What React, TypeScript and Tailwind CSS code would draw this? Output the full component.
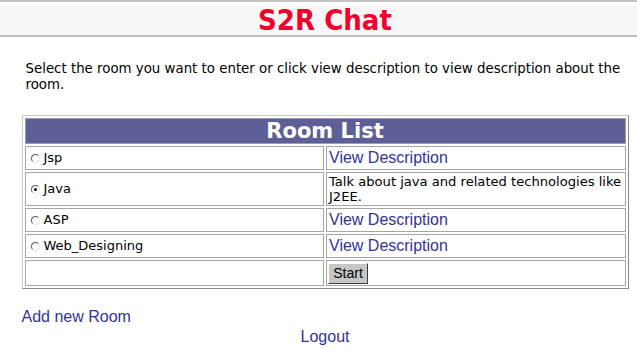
const rooms = [
  { name: "Jsp", h: "h-[24px]" },
  {
    name: "Java",
    h: "h-[34px]",
    checked: true,
    desc: ["Talk about java and related technologies like", "J2EE."],
  },
  { name: "ASP", h: "h-[24px]" },
  { name: "Web_Designing", h: "h-[24px]" },
];

function Radio({ checked }: { checked?: boolean }) {
  return (
    <span className="relative ml-[5px] mr-[4px] inline-block h-[9px] w-[9px] shrink-0 rounded-full border border-t-[#5a5a5a] border-l-[#5a5a5a] border-r-[#e6e6e6] border-b-[#e6e6e6] bg-white">
      {checked && (
        <span className="absolute left-[2px] top-[2px] h-[3px] w-[3px] rounded-full bg-black" />
      )}
    </span>
  );
}

export default function App() {
  return (
    <div className="h-[348px] w-[637px] overflow-hidden bg-white">
      <div className="w-[650px]">
        {/* page title bar */}
        <div className="border-t-2 border-b-2 border-t-[#c2c2c2] border-b-[#bdbdbd] bg-white">
          <div className="mt-[3px] bg-[#f7f7f7] text-center font-['DejaVu_Sans_Condensed','DejaVu_Sans',sans-serif] text-[29px] font-bold leading-[30px] text-[#f0002b]">
            S2R Chat
          </div>
        </div>

        <div className="mx-auto mt-[24px] w-[607px]">
          <p className="px-[4px] font-['DejaVu_Sans',sans-serif] text-[13.35px] leading-[16px] text-black">
            <span className="whitespace-nowrap">
              Select the room you want to enter or click view description to view description about the
            </span>
            <br />
            room.
          </p>

          <table className="mt-[22px] w-[607px] table-fixed border-separate border-spacing-[2px] border border-t-[#c8c8c8] border-l-[#c8c8c8] border-r-[#8a8a8a] border-b-[#8a8a8a] leading-none">
            <thead>
              <tr>
                <th
                  colSpan={2}
                  className="h-[26px] border border-[#9c9cb8] bg-[#5f5f98] p-0 text-center font-['DejaVu_Sans',sans-serif] text-[21px] font-bold leading-[24px] text-white"
                >
                  Room List
                </th>
              </tr>
            </thead>
            <tbody>
              {rooms.map((room) => (
                <tr key={room.name}>
                  <td className={`${room.h} border border-[#a6a6a6] p-0 align-middle`}>
                    <div className="flex items-center font-['DejaVu_Sans',sans-serif] text-[13px] leading-[16px] text-black">
                      <Radio checked={room.checked} />
                      {room.name}
                    </div>
                  </td>
                  <td className={`${room.h} border border-[#a6a6a6] p-0 pl-[2px] align-middle`}>
                    {room.desc ? (
                      <div className="font-['DejaVu_Sans',sans-serif] text-[13.1px] leading-[15px] text-black">
                        <span className="whitespace-nowrap">{room.desc[0]}</span>
                        <br />
                        {room.desc[1]}
                      </div>
                    ) : (
                      <a className="block font-['Liberation_Sans',Arial,sans-serif] text-[16px] leading-[18px] text-[#333399]">
                        View Description
                      </a>
                    )}
                  </td>
                </tr>
              ))}
              <tr>
                <td className="h-[26px] border border-[#a6a6a6] p-0" />
                <td className="h-[26px] border border-[#a6a6a6] p-0 pl-[1px] align-middle">
                  <button className="block h-[21px] w-[40px] border border-t-white border-l-white border-r-[#3c3c3c] border-b-[#3c3c3c] bg-[#c6c6c6] p-0 font-['Liberation_Sans',Arial,sans-serif] text-[14px] leading-[19px] text-black">
                    Start
                  </button>
                </td>
              </tr>
            </tbody>
          </table>

          <div className="mt-[18px] font-['Liberation_Sans',Arial,sans-serif] text-[16px] leading-[20px] text-[#333399]">
            Add new Room
          </div>
        </div>
        <div className="text-center font-['Liberation_Sans',Arial,sans-serif] text-[16px] leading-[20px] text-[#333399]">
          Logout
        </div>
      </div>
    </div>
  );
}
